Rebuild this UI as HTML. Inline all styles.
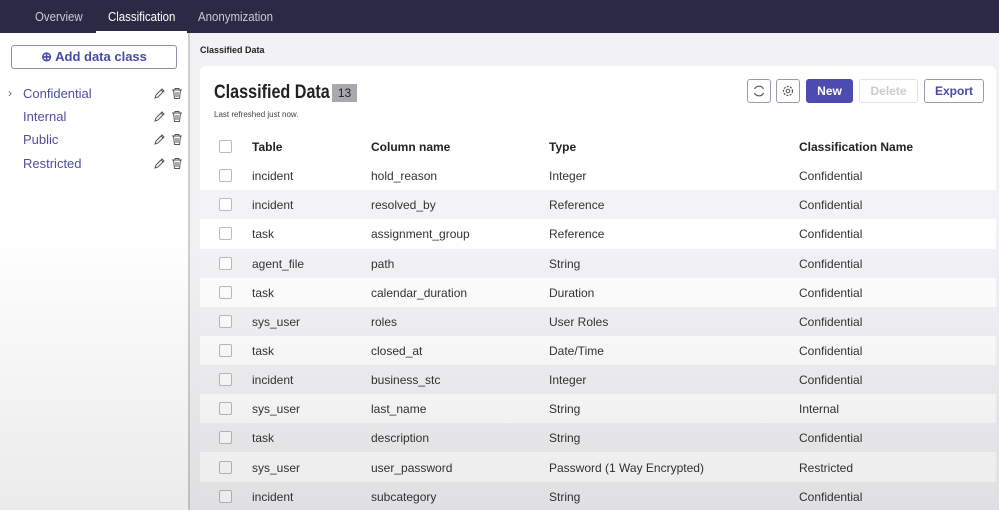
<!DOCTYPE html>
<html><head><style>
*{box-sizing:border-box;margin:0;padding:0}
html,body{width:999px;height:510px;overflow:hidden}
body{font-family:"Liberation Sans",sans-serif;background:#f2f2f4;position:relative}
.top{position:absolute;left:0;top:0;width:999px;height:33px;background:#2b2a45}
.tab{position:absolute;top:9px;font-size:13px;color:#c9c9d6;transform:scaleX(.88);transform-origin:left;white-space:nowrap}
.left{position:absolute;left:0;top:33px;width:188px;height:477px;background:#fff}
.div{position:absolute;left:188px;top:33px;width:2px;height:477px;background:#cfcfd2}
.add{position:absolute;left:11px;top:45px;width:166px;height:24px;border:1px solid #8f8fa0;border-radius:3px;color:#4a49a8;font-weight:bold;font-size:13px;text-align:center;line-height:22px}
.cls{position:absolute;left:23px;font-size:13px;color:#4f4ea3}
.ic{position:absolute;left:153px}
.bc{position:absolute;left:200px;top:45px;font-size:9px;font-weight:bold;color:#222}
.card{position:absolute;left:200px;top:66px;width:796px;height:444px;background:#fff;border-radius:6px 6px 0 0}
h1{position:absolute;left:214px;top:82px;font-size:19px;font-weight:bold;color:#222;transform:scaleX(.85);transform-origin:left;white-space:nowrap}
.cnt{position:absolute;left:332px;top:84px;width:25px;height:18px;background:#a9a9ad;font-size:12px;text-align:center;line-height:18px;color:#222}
.lr{position:absolute;left:214px;top:110px;font-size:8px;color:#444}
.btn{position:absolute;top:79px;height:24px;border:1px solid #9a9ab0;border-radius:3px;background:#fff;font-size:12px;font-weight:bold;text-align:center;line-height:22px;color:#4a49a8}
.btn svg{margin-top:4px}
.row{position:absolute;left:200px;width:796px;height:29px;font-size:12px;color:#333}
.row span{position:absolute;top:8px}
.cb{position:absolute;left:19px;top:8px;width:13px;height:13px;border:1px solid #bbb;border-radius:2px;background:#fff}
.g{background:#f3f3f5}
.h{font-weight:bold;color:#222}
.shade{position:absolute;left:0;top:0;width:999px;height:510px;background:linear-gradient(to bottom,rgba(0,0,0,0) 0,rgba(0,0,0,0) 45%,rgba(0,0,0,.08) 100%);pointer-events:none}
</style></head><body>
<div class="top"></div>
<div class="tab" style="left:35px">Overview</div>
<div class="tab" style="left:108px;color:#fff">Classification</div>
<div style="position:absolute;left:96px;top:31px;width:91px;height:3px;background:#fff"></div>
<div class="tab" style="left:198px">Anonymization</div>
<div class="left"></div><div class="div"></div>
<div class="add">⊕ Add data class</div>
<div style="position:absolute;left:8px;top:86px;font-size:12px;color:#666">›</div>
<div class="cls" style="top:86px">Confidential</div>
<div class="cls" style="top:109px">Internal</div>
<div class="cls" style="top:132px">Public</div>
<div class="cls" style="top:156px">Restricted</div>
<svg width="0" height="0" style="position:absolute"><defs><g id="pe"><path d="M2 11 L3 8 L9 2 L11 4 L5 10 Z M8 3 L10 5" fill="none" stroke="#555" stroke-width="1"/></g><g id="tr"><path d="M1 3 H11 M4 3 V1.5 H8 V3 M2.5 3 L3.5 11.5 H8.5 L9.5 3 M5 5 V10 M7 5 V10" fill="none" stroke="#555" stroke-width="1"/></g></defs></svg>
<svg class="ic" style="top:87px" width="30" height="13"><use href="#pe"/><use href="#tr" x="18"/></svg>
<svg class="ic" style="top:110px" width="30" height="13"><use href="#pe"/><use href="#tr" x="18"/></svg>
<svg class="ic" style="top:133px" width="30" height="13"><use href="#pe"/><use href="#tr" x="18"/></svg>
<svg class="ic" style="top:157px" width="30" height="13"><use href="#pe"/><use href="#tr" x="18"/></svg>
<div class="bc">Classified Data</div>
<div class="card"></div>
<h1>Classified Data</h1>
<div class="cnt">13</div>
<div class="lr">Last refreshed just now.</div>
<div class="btn" style="left:747px;width:24px"><svg width="14" height="14"><path d="M11.5 5 A5 5 0 0 0 2.5 5 M2.5 9 A5 5 0 0 0 11.5 9" fill="none" stroke="#555" stroke-width="1.2"/></svg></div>
<div class="btn" style="left:776px;width:24px"><svg width="14" height="14"><circle cx="7" cy="7" r="4.5" fill="none" stroke="#555" stroke-width="1.2" stroke-dasharray="2 1.3"/><circle cx="7" cy="7" r="1.8" fill="none" stroke="#555"/></svg></div>
<div class="btn" style="left:806px;width:47px;background:#4d4bb0;border-color:#4d4bb0;color:#fff">New</div>
<div class="btn" style="left:859px;width:59px;color:#ccc;border-color:#e2e2e6">Delete</div>
<div class="btn" style="left:924px;width:60px">Export</div>
<div class="row h" style="top:132px"><div class="cb"></div><span style="left:52px">Table</span><span style="left:171px">Column name</span><span style="left:349px">Type</span><span style="left:599px">Classification Name</span></div>
<div class="row" style="top:161px"><div class="cb"></div><span style="left:52px">incident</span><span style="left:171px">hold_reason</span><span style="left:349px">Integer</span><span style="left:599px">Confidential</span></div>
<div class="row g" style="top:190px"><div class="cb"></div><span style="left:52px">incident</span><span style="left:171px">resolved_by</span><span style="left:349px">Reference</span><span style="left:599px">Confidential</span></div>
<div class="row" style="top:219px"><div class="cb"></div><span style="left:52px">task</span><span style="left:171px">assignment_group</span><span style="left:349px">Reference</span><span style="left:599px">Confidential</span></div>
<div class="row g" style="top:249px"><div class="cb"></div><span style="left:52px">agent_file</span><span style="left:171px">path</span><span style="left:349px">String</span><span style="left:599px">Confidential</span></div>
<div class="row" style="top:278px"><div class="cb"></div><span style="left:52px">task</span><span style="left:171px">calendar_duration</span><span style="left:349px">Duration</span><span style="left:599px">Confidential</span></div>
<div class="row g" style="top:307px"><div class="cb"></div><span style="left:52px">sys_user</span><span style="left:171px">roles</span><span style="left:349px">User Roles</span><span style="left:599px">Confidential</span></div>
<div class="row" style="top:336px"><div class="cb"></div><span style="left:52px">task</span><span style="left:171px">closed_at</span><span style="left:349px">Date/Time</span><span style="left:599px">Confidential</span></div>
<div class="row g" style="top:365px"><div class="cb"></div><span style="left:52px">incident</span><span style="left:171px">business_stc</span><span style="left:349px">Integer</span><span style="left:599px">Confidential</span></div>
<div class="row" style="top:394px"><div class="cb"></div><span style="left:52px">sys_user</span><span style="left:171px">last_name</span><span style="left:349px">String</span><span style="left:599px">Internal</span></div>
<div class="row g" style="top:423px"><div class="cb"></div><span style="left:52px">task</span><span style="left:171px">description</span><span style="left:349px">String</span><span style="left:599px">Confidential</span></div>
<div class="row" style="top:453px"><div class="cb"></div><span style="left:52px">sys_user</span><span style="left:171px">user_password</span><span style="left:349px">Password (1 Way Encrypted)</span><span style="left:599px">Restricted</span></div>
<div class="row g" style="top:482px"><div class="cb"></div><span style="left:52px">incident</span><span style="left:171px">subcategory</span><span style="left:349px">String</span><span style="left:599px">Confidential</span></div>
<div class="shade"></div>
</body></html>
